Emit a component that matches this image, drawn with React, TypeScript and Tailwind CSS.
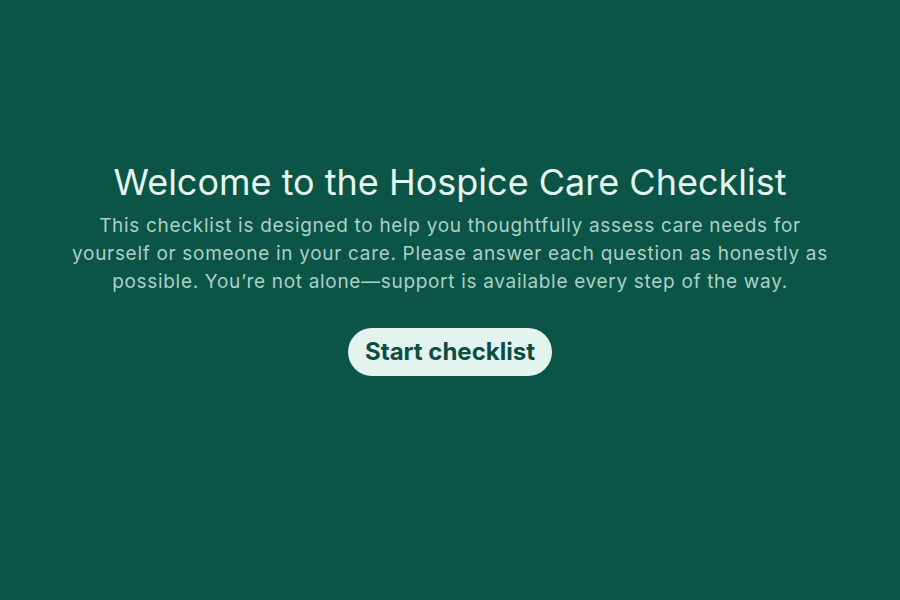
export default function App() {
  return (
    <div className="min-h-screen w-full bg-[#0b5446] flex flex-col items-center pt-[162px]" style={{ fontFamily: "Inter, 'Noto Sans', sans-serif" }}>
      <h1 className="text-[36px] leading-[40px] font-normal text-[#e3f6f0] text-center">Welcome to the Hospice Care Checklist</h1>
      <p className="mt-[10px] max-w-[780px] px-2 text-[19px] leading-[28px] tracking-[0.036em] text-[#a9d2c5] text-center">
        This checklist is designed to help you thoughtfully assess care needs for yourself or someone in your care. Please answer each question as honestly as possible. You’re not alone—support is available every step of the way.
      </p>
      <button className="mt-8 h-12 px-[17px] rounded-full bg-[#e3f3f0] text-[#0b4d3f] text-[24px] font-bold leading-8">Start checklist</button>
    </div>
  );
}
